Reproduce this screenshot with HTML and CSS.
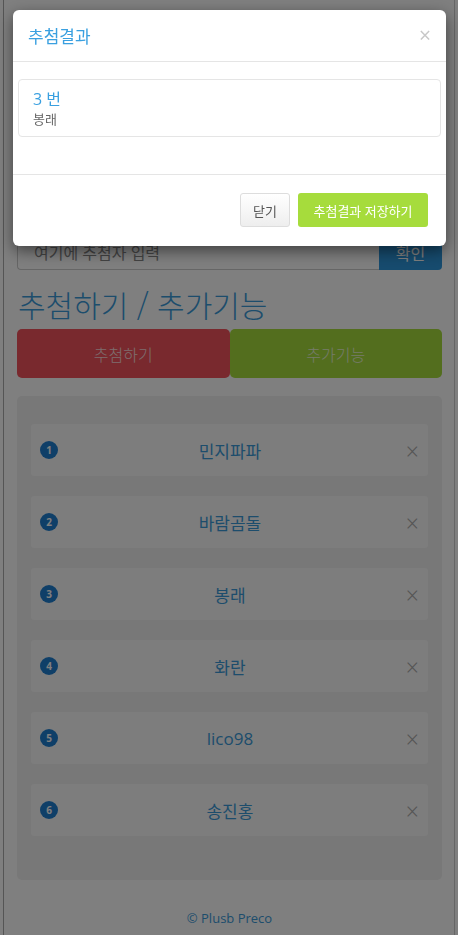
FILE: index.html
```html
<!DOCTYPE html>
<html lang="ko">
<head>
    <meta charset="UTF-8">
    <title>추첨하기</title>
    <link rel="stylesheet" href="styles.css">
</head>
<body>
<div id="page">
    <div class="input-group">
        <input class="form-control" type="text" placeholder="여기에 추첨자 입력">
        <button class="btn-confirm">확인</button>
    </div>
    <h2 class="title">추첨하기 / 추가기능</h2>
    <div class="tabs">
        <button class="tab tab-draw">추첨하기</button>
        <button class="tab tab-extra">추가기능</button>
    </div>
    <div class="list-box">
        <ul class="list">
            <li><span class="badge">1</span><span class="name">민지파파</span><span class="remove">&times;</span></li>
            <li><span class="badge">2</span><span class="name">바람곰돌</span><span class="remove">&times;</span></li>
            <li><span class="badge">3</span><span class="name">봉래</span><span class="remove">&times;</span></li>
            <li><span class="badge">4</span><span class="name">화란</span><span class="remove">&times;</span></li>
            <li><span class="badge">5</span><span class="name">lico98</span><span class="remove">&times;</span></li>
            <li><span class="badge">6</span><span class="name">송진홍</span><span class="remove">&times;</span></li>
        </ul>
    </div>
    <p class="copy">&copy; Plusb Preco</p>
</div>

<div class="backdrop"></div>
<div class="modal">
    <div class="modal-header">
        <h4 class="modal-title">추첨결과</h4>
        <span class="close">&times;</span>
    </div>
    <div class="modal-body">
        <div class="result">
            <div class="result-num">3 번</div>
            <div class="result-name">봉래</div>
        </div>
    </div>
    <div class="modal-footer">
        <button class="btn btn-default">닫기</button>
        <button class="btn btn-save">추첨결과 저장하기</button>
    </div>
</div>
</body>
</html>
```

FILE: styles.css
```css
* {
    margin: 0;
    padding: 0;
    box-sizing: border-box;
}

body {
    font-family: "Open Sans", "Noto Sans CJK KR", sans-serif;
    background: #fff;
    color: #333;
}

ul {
    list-style: none;
}

button {
    font-family: inherit;
    border: 0;
}

#page {
    margin: 0 3px;
    min-height: 935px;
    border-left: 1px solid #aaa;
    border-right: 1px solid #ccc;
    padding: 236px 12px 0 13px;
}

.input-group {
    display: flex;
    height: 34px;
}

.form-control {
    flex: 1;
    border: 1px solid #ccc;
    border-right: 0;
    border-radius: 4px 0 0 4px;
    padding: 0 16px;
    font-family: inherit;
    font-size: 16px;
    color: #555;
}

.form-control::placeholder {
    color: #888;
}

.btn-confirm {
    width: 63px;
    background: #2d96dc;
    color: #fff;
    font-size: 16px;
    border-radius: 0 4px 4px 0;
}

.title {
    margin: 18px 0 8px 1px;
    font-family: "Noto Sans CJK KR", sans-serif;
    font-size: 30px;
    font-weight: 300;
    line-height: 1.1;
    color: #3a9ad9;
}

.tabs {
    display: flex;
}

.tab {
    flex: 1;
    height: 49px;
    border-radius: 5px;
    font-size: 16px;
    font-weight: 300;
    color: rgba(255, 255, 255, 0.8);
}

.tab-draw {
    background: #f2525c;
}

.tab-extra {
    background: #a6dc3c;
}

.list-box {
    margin-top: 18px;
    height: 484px;
    padding: 28px 14px 0;
    background: #f0f0f0;
    border-radius: 5px;
}

.list li {
    display: flex;
    align-items: center;
    height: 52px;
    margin-bottom: 20px;
    padding: 0 9px 0 9px;
    background: #fafafa;
    border-radius: 3px;
}

.badge {
    width: 18px;
    height: 18px;
    border-radius: 50%;
    background: #1f7fd0;
    color: #fff;
    font-size: 10px;
    font-weight: bold;
    line-height: 18px;
    text-align: center;
}

.name {
    flex: 1;
    text-align: center;
    font-size: 17px;
    color: #3a9ad9;
    padding-right: 4px;
}

.remove {
    margin-top: 2px;
    font-size: 23px;
    font-weight: 300;
    color: #a8a8a8;
    line-height: 1;
}

.copy {
    margin-top: 29px;
    text-align: center;
    font-size: 13px;
    color: #3a9ad9;
}

.backdrop {
    position: fixed;
    top: 0;
    left: 0;
    right: 0;
    bottom: 0;
    background: rgba(0, 0, 0, 0.5);
}

.modal {
    position: fixed;
    top: 10px;
    left: 13px;
    width: 433px;
    background: #fff;
    border-radius: 6px;
    box-shadow: 0 5px 15px rgba(0, 0, 0, 0.5);
}

.modal-header {
    display: flex;
    align-items: center;
    justify-content: space-between;
    height: 52px;
    padding: 0 15px;
    border-bottom: 1px solid #e5e5e5;
}

.modal-title {
    font-size: 17px;
    font-weight: normal;
    color: #3aa0e0;
}

.close {
    font-size: 21px;
    color: #c8c8c8;
    line-height: 1;
}

.modal-body {
    height: 112px;
    padding: 17px 5px 0;
}

.result {
    height: 58px;
    padding: 8px 14px;
    border: 1px solid #e5e5e5;
    border-radius: 4px;
}

.result-num {
    font-size: 16px;
    line-height: 22px;
    color: #3aa0e0;
}

.result-name {
    font-size: 13px;
    line-height: 18px;
    color: #666;
}

.modal-footer {
    display: flex;
    justify-content: flex-end;
    gap: 8px;
    padding: 18px 18px 19px;
    border-top: 1px solid #e5e5e5;
}

.btn {
    height: 34px;
    padding: 0 12px;
    border-radius: 3px;
    font-size: 13px;
}

.btn-default {
    width: 50px;
    background: linear-gradient(#fff, #eee);
    border: 1px solid #ddd;
    color: #555;
}

.btn-save {
    width: 130px;
    background: #a6dc3c;
    color: #fff;
}
```
